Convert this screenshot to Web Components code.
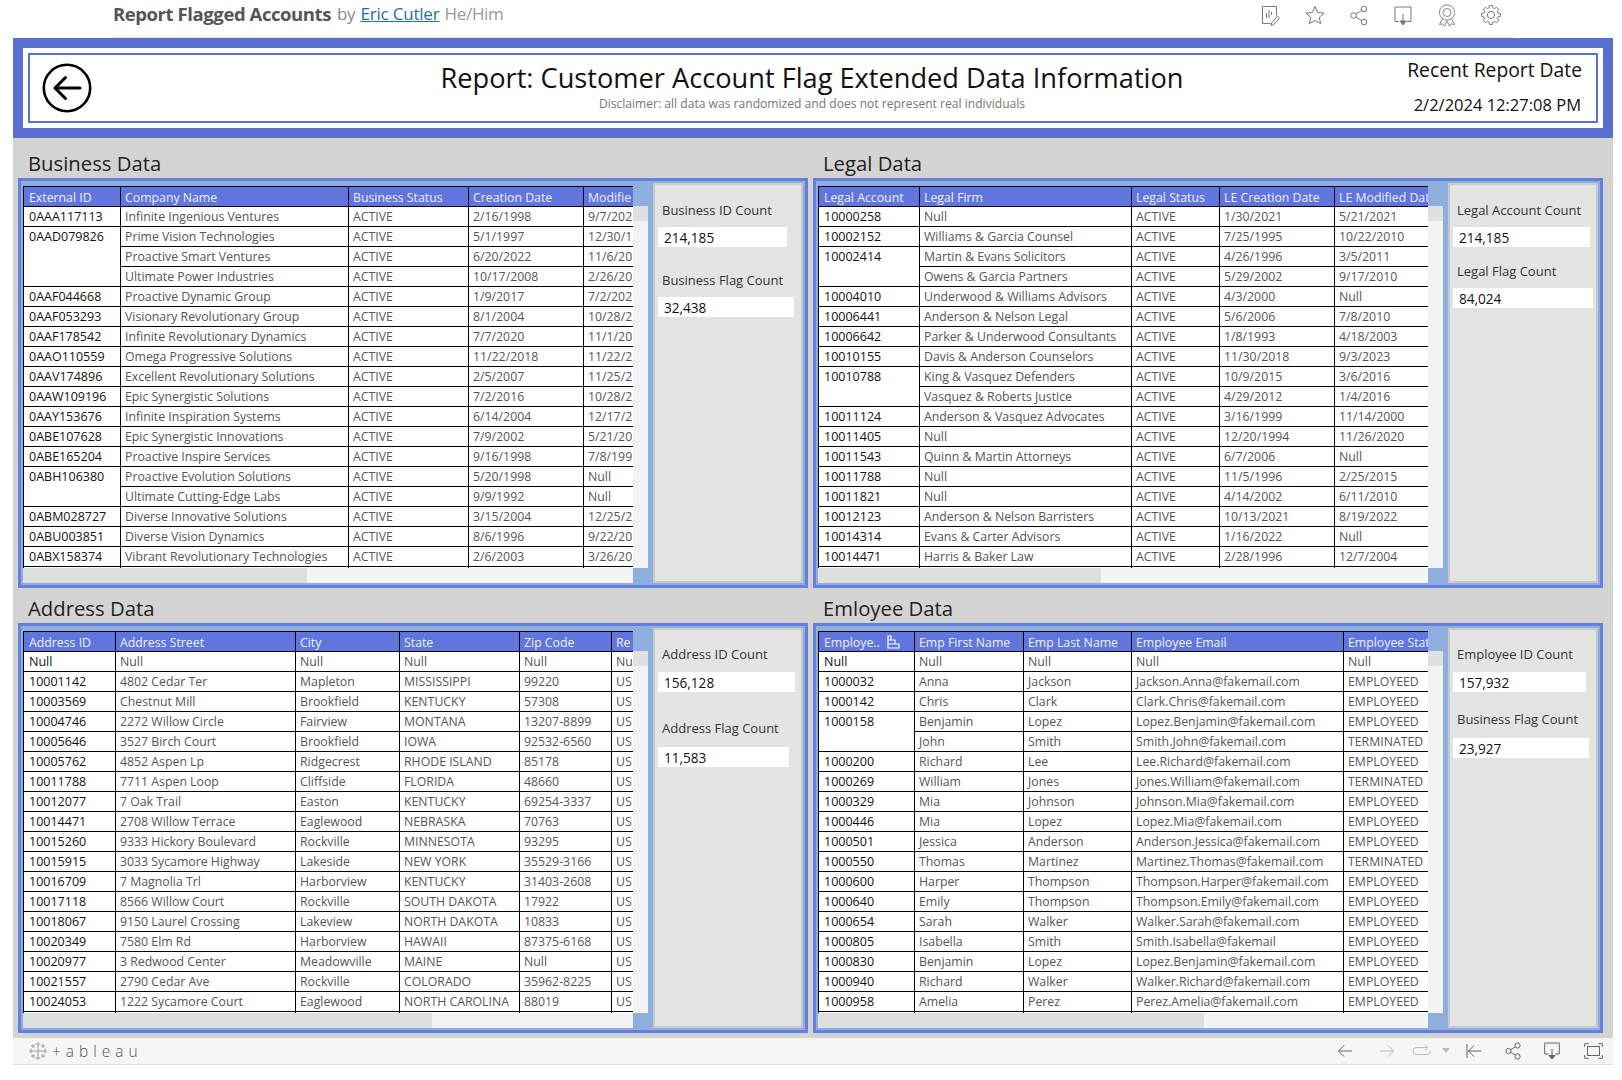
<!DOCTYPE html>
<html lang="en"><head><meta charset="utf-8"><title>Report Flagged Accounts</title>
<style>
html,body{margin:0;background:#fff;font-family:"Open Sans","Noto Sans",sans-serif}
body{width:1622px;height:1080px;overflow:hidden}
</style></head><body>
<top-bar></top-bar>
<report-dash>
  <report-header slot="header"></report-header>
  <report-panel heading="Business Data" thumb="284" style="--pt:15px;--pb:5px">
    <data-grid slot="table" source="business"></data-grid>
    <side-stat slot="side" label="Business ID Count" value="214,185" style="--w:129px;--mt:15px;--gap:7px"></side-stat>
    <side-stat slot="side" label="Business Flag Count" value="32,438" style="--w:136px;--mt:23px;--gap:7px"></side-stat>
  </report-panel>
  <report-panel heading="Legal Data" thumb="283" style="--pt:15px;--pb:5px">
    <data-grid slot="table" source="legal"></data-grid>
    <side-stat slot="side" label="Legal Account Count" value="214,185" style="--w:137px;--mt:15px;--gap:7px"></side-stat>
    <side-stat slot="side" label="Legal Flag Count" value="84,024" style="--w:140px;--mt:14px;--gap:7px"></side-stat>
  </report-panel>
  <report-panel heading="Address Data" thumb="409" style="--pt:10px;--pb:5px">
    <data-grid slot="table" source="address"></data-grid>
    <side-stat slot="side" label="Address ID Count" value="156,128" style="--w:137px;--mt:14px;--gap:8px"></side-stat>
    <side-stat slot="side" label="Address Flag Count" value="11,583" style="--w:131px;--mt:26px;--gap:9px"></side-stat>
  </report-panel>
  <report-panel heading="Emloyee Data" thumb="386" style="--pt:10px;--pb:5px">
    <data-grid slot="table" source="employee"></data-grid>
    <side-stat slot="side" label="Employee ID Count" value="157,932" style="--w:133px;--mt:14px;--gap:8px"></side-stat>
    <side-stat slot="side" label="Business Flag Count" value="23,927" style="--w:136px;--mt:17px;--gap:9px"></side-stat>
  </report-panel>
</report-dash>
<bottom-bar></bottom-bar>
<script>
const DATA={
business:{cols:[97,228,120,115,50],head:["External ID","Company Name","Business Status","Creation Date","Modifie"],rows:`0AAA117113|Infinite Ingenious Ventures|ACTIVE|2/16/1998|9/7/202
0AAD079826|Prime Vision Technologies|ACTIVE|5/1/1997|12/30/1
|Proactive Smart Ventures|ACTIVE|6/20/2022|11/6/20
|Ultimate Power Industries|ACTIVE|10/17/2008|2/26/20
0AAF044668|Proactive Dynamic Group|ACTIVE|1/9/2017|7/2/202
0AAF053293|Visionary Revolutionary Group|ACTIVE|8/1/2004|10/28/2
0AAF178542|Infinite Revolutionary Dynamics|ACTIVE|7/7/2020|11/1/20
0AAO110559|Omega Progressive Solutions|ACTIVE|11/22/2018|11/22/2
0AAV174896|Excellent Revolutionary Solutions|ACTIVE|2/5/2007|11/25/2
0AAW109196|Epic Synergistic Solutions|ACTIVE|7/2/2016|10/28/2
0AAY153676|Infinite Inspiration Systems|ACTIVE|6/14/2004|12/17/2
0ABE107628|Epic Synergistic Innovations|ACTIVE|7/9/2002|5/21/20
0ABE165204|Proactive Inspire Services|ACTIVE|9/16/1998|7/8/199
0ABH106380|Proactive Evolution Solutions|ACTIVE|5/20/1998|Null
|Ultimate Cutting-Edge Labs|ACTIVE|9/9/1992|Null
0ABM028727|Diverse Innovative Solutions|ACTIVE|3/15/2004|12/25/2
0ABU003851|Diverse Vision Dynamics|ACTIVE|8/6/1996|9/22/20
0ABX158374|Vibrant Revolutionary Technologies|ACTIVE|2/6/2003|3/26/20`},
legal:{cols:[101,212,88,115,94],head:["Legal Account","Legal Firm","Legal Status","LE Creation Date","LE Modified Dat"],rows:`10000258|Null|ACTIVE|1/30/2021|5/21/2021
10002152|Williams & Garcia Counsel|ACTIVE|7/25/1995|10/22/2010
10002414|Martin & Evans Solicitors|ACTIVE|4/26/1996|3/5/2011
|Owens & Garcia Partners|ACTIVE|5/29/2002|9/17/2010
10004010|Underwood & Williams Advisors|ACTIVE|4/3/2000|Null
10006441|Anderson & Nelson Legal|ACTIVE|5/6/2006|7/8/2010
10006642|Parker & Underwood Consultants|ACTIVE|1/8/1993|4/18/2003
10010155|Davis & Anderson Counselors|ACTIVE|11/30/2018|9/3/2023
10010788|King & Vasquez Defenders|ACTIVE|10/9/2015|3/6/2016
|Vasquez & Roberts Justice|ACTIVE|4/29/2012|1/4/2016
10011124|Anderson & Vasquez Advocates|ACTIVE|3/16/1999|11/14/2000
10011405|Null|ACTIVE|12/20/1994|11/26/2020
10011543|Quinn & Martin Attorneys|ACTIVE|6/7/2006|Null
10011788|Null|ACTIVE|11/5/1996|2/25/2015
10011821|Null|ACTIVE|4/14/2002|6/11/2010
10012123|Anderson & Nelson Barristers|ACTIVE|10/13/2021|8/19/2022
10014314|Evans & Carter Advisors|ACTIVE|1/16/2022|Null
10014471|Harris & Baker Law|ACTIVE|2/28/1996|12/7/2004`},
address:{cols:[92,180,104,120,92,22],head:["Address ID","Address Street","City","State","Zip Code","Re"],rows:`Null|Null|Null|Null|Null|Nu
10001142|4802 Cedar Ter|Mapleton|MISSISSIPPI|99220|US
10003569|Chestnut Mill|Brookfield|KENTUCKY|57308|US
10004746|2272 Willow Circle|Fairview|MONTANA|13207-8899|US
10005646|3527 Birch Court|Brookfield|IOWA|92532-6560|US
10005762|4852 Aspen Lp|Ridgecrest|RHODE ISLAND|85178|US
10011788|7711 Aspen Loop|Cliffside|FLORIDA|48660|US
10012077|7 Oak Trail|Easton|KENTUCKY|69254-3337|US
10014471|2708 Willow Terrace|Eaglewood|NEBRASKA|70763|US
10015260|9333 Hickory Boulevard|Rockville|MINNESOTA|93295|US
10015915|3033 Sycamore Highway|Lakeside|NEW YORK|35529-3166|US
10016709|7 Magnolia Trl|Harborview|KENTUCKY|31403-2608|US
10017118|8566 Willow Court|Rockville|SOUTH DAKOTA|17922|US
10018067|9150 Laurel Crossing|Lakeview|NORTH DAKOTA|10833|US
10020349|7580 Elm Rd|Harborview|HAWAII|87375-6168|US
10020977|3 Redwood Center|Meadowville|MAINE|Null|US
10021557|2790 Cedar Ave|Rockville|COLORADO|35962-8225|US
10024053|1222 Sycamore Court|Eaglewood|NORTH CAROLINA|88019|US`},
employee:{cols:[96,109,108,212,85],sort:true,head:["Employe..","Emp First Name","Emp Last Name","Employee Email","Employee Stat"],rows:`Null|Null|Null|Null|Null
1000032|Anna|Jackson|Jackson.Anna@fakemail.com|EMPLOYEED
1000142|Chris|Clark|Clark.Chris@fakemail.com|EMPLOYEED
1000158|Benjamin|Lopez|Lopez.Benjamin@fakemail.com|EMPLOYEED
|John|Smith|Smith.John@fakemail.com|TERMINATED
1000200|Richard|Lee|Lee.Richard@fakemail.com|EMPLOYEED
1000269|William|Jones|Jones.William@fakemail.com|TERMINATED
1000329|Mia|Johnson|Johnson.Mia@fakemail.com|EMPLOYEED
1000446|Mia|Lopez|Lopez.Mia@fakemail.com|EMPLOYEED
1000501|Jessica|Anderson|Anderson.Jessica@fakemail.com|EMPLOYEED
1000550|Thomas|Martinez|Martinez.Thomas@fakemail.com|TERMINATED
1000600|Harper|Thompson|Thompson.Harper@fakemail.com|EMPLOYEED
1000640|Emily|Thompson|Thompson.Emily@fakemail.com|EMPLOYEED
1000654|Sarah|Walker|Walker.Sarah@fakemail.com|EMPLOYEED
1000805|Isabella|Smith|Smith.Isabella@fakemail|EMPLOYEED
1000830|Benjamin|Lopez|Lopez.Benjamin@fakemail.com|EMPLOYEED
1000940|Richard|Walker|Walker.Richard@fakemail.com|EMPLOYEED
1000958|Amelia|Perez|Perez.Amelia@fakemail.com|EMPLOYEED`}
};
const esc=s=>s.replace(/&/g,"&amp;");
function gearPath(cx,cy,ro,ri,n){let d="";const st=Math.PI*2/n;for(let i=0;i<n;i++){const a=i*st-Math.PI/2;const p=[[a-st*.36,ri],[a-st*.2,ro],[a+st*.2,ro],[a+st*.36,ri]];p.forEach((q,j)=>{const x=cx+Math.cos(q[0])*q[1],y=cy+Math.sin(q[0])*q[1];d+=(i===0&&j===0?"M":"L")+x.toFixed(2)+" "+y.toFixed(2)});}return d+"Z"}
const svgI=(w,h,inner,sw=1,col="#777")=>`<svg width="${w}" height="${h}" viewBox="0 0 ${w} ${h}" fill="none" stroke="${col}" stroke-width="${sw}">${inner}</svg>`;
class TopBar extends HTMLElement{constructor(){super();this.attachShadow({mode:"open"}).innerHTML=`<style>
:host{display:flex;align-items:center;height:37px;margin-left:113px;width:1400px;border-bottom:1px solid #ddd;box-sizing:content-box;font-family:"Open Sans",sans-serif}
.t{font-size:18.5px;font-weight:700;color:#555;letter-spacing:-.42px;margin-right:6px;margin-top:-11px}
.m{font-size:17px;color:#888;margin-top:-10px;letter-spacing:-.3px}
a{color:#1d6f9f;text-decoration:underline;margin:0 5px 0 1px;letter-spacing:-.2px;font-weight:500}
.h{color:#999}
.ic{margin-left:auto;display:flex;gap:20px;padding-right:10px;margin-top:-8px}
svg{display:block}
.first{margin-right:2px}
</style><span class="t">Report Flagged Accounts</span><span class="m">by <a href="#">Eric Cutler</a><span class="h">He/Him</span></span>
<div class="ic">
<span class="first">${svgI(24,24,'<path d="M5.5 20.5V3.5h14v9M5.5 20.5h8"/><path d="M9.5 15V10M12 15V7M14.5 12V9"/><path d="M14.5 20l6-7 2 1.8-6 7-2.5.7z"/>')}</span>
${svgI(24,24,'<path d="M12 3.5l2.6 6 6.5.6-4.9 4.3 1.5 6.4-5.7-3.4-5.7 3.4 1.5-6.4-4.9-4.3 6.5-.6z"/>')}
${svgI(24,24,'<circle cx="17" cy="6" r="2.8"/><circle cx="17" cy="19" r="2.8"/><circle cx="6.5" cy="12.5" r="2.8"/><path d="M9 11l5.7-3.6M9 14l5.7 3.6"/>')}
${svgI(24,24,'<path d="M8 18.5H4V4h16v14.5h-4"/><path d="M12 11v9"/><path d="M9 18h6l-3 4z" fill="#777"/>')}
${svgI(24,24,'<circle cx="12" cy="9.5" r="7.6"/><circle cx="12" cy="9.5" r="4"/><path d="M7.5 15.5L4.5 21.5l3.3-.6 1.7 2.4 2.5-5.6 2.5 5.6 1.7-2.4 3.3.6-3-6"/>',1,"#888")}
${svgI(24,24,'<path d="'+gearPath(12,12,9.5,7.3,8)+'"/><circle cx="12" cy="12" r="3.6"/>')}
</div>`}}
class ReportDash extends HTMLElement{constructor(){super();this.attachShadow({mode:"open"}).innerHTML=`<style>
:host{display:block;margin-left:13px;width:1600px;background:#d3d3d3}
.g{display:grid;grid-template-columns:790px 790px;column-gap:5px;padding:0 10px 5px 5px}
</style><slot name="header"></slot><div class="g"><slot></slot></div>`}}
class ReportHeader extends HTMLElement{constructor(){super();this.attachShadow({mode:"open"}).innerHTML=`<style>
:host{display:block;height:100px;box-sizing:border-box;background:#5a70cf;padding:10px}
.w{background:#fff;height:80px;box-sizing:border-box;padding:5px}
.i{box-sizing:border-box;height:70px;border:2px solid #5a70cf;display:grid;grid-template-columns:1fr auto 1fr;padding:0 14px 0 12px;color:#000}
.c{text-align:center;padding-top:5px}
h1{margin:0;font-size:27.2px;line-height:36px;font-weight:400;color:#111}
p{margin:0;font-size:12.1px;line-height:15px;color:#777}
.r{text-align:right;justify-self:end;padding-top:3px}
.r div:first-child{font-size:19.3px;line-height:24px;color:#111}
.r div:last-child{font-size:16.5px;line-height:22px;margin-top:12px;color:#111;padding-right:1px}
svg{display:block;margin-top:8px}
</style><div class="w"><div class="i">
<svg width="50" height="50" viewBox="0 0 50 50" fill="none" stroke="#000"><circle cx="25" cy="25" r="23.2" stroke-width="2.6"/><path d="M38 25H13M23.5 14.5L13 25l10.5 10.5" stroke-width="3" stroke-linecap="round" stroke-linejoin="round"/></svg>
<div class="c"><h1>Report: Customer Account Flag Extended Data Information</h1><p>Disclaimer: all data was randomized and does not represent real individuals</p></div>
<div class="r"><div>Recent Report Date</div><div>2/2/2024 12:27:08 PM</div></div>
</div></div>`}}
class ReportPanel extends HTMLElement{constructor(){super();const t=this.getAttribute("thumb")||"200";this.attachShadow({mode:"open"}).innerHTML=`<style>
:host{display:block}
h2{margin:0;font-size:20.3px;font-weight:400;line-height:20px;color:#222;padding:var(--pt) 0 var(--pb) 10px}
.p{box-sizing:border-box;height:410px;border:3px solid #6480de;background:#8eaedd;padding:2px;display:flex;gap:5px}
.m{width:625px;padding-top:3px;display:grid;grid-template-columns:610px 15px;grid-template-rows:382px 15px}
.v{padding-top:20px;display:flex}
.vt{flex:1;background:#f3f3f3}
.vt i{display:block;height:15px;background:#e0e0e0}
.h{background:#f3f3f3}
.h i{display:block;height:100%;width:${t}px;background:#dedede}
.s{width:150px;box-sizing:border-box;border:2px solid #c8c8c8;background:#e3e3e3;padding-left:3px;display:flex;flex-direction:column}
.t{overflow:hidden}
</style><h2>${this.getAttribute("heading")}</h2><div class="p"><div class="m"><div class="t"><slot name="table"></slot></div><div class="v"><div class="vt"><i></i></div></div><div class="h"><i></i></div></div><div class="s"><slot name="side"></slot></div></div>`}}
class DataGrid extends HTMLElement{constructor(){super();const d=DATA[this.getAttribute("source")];const rows=d.rows.split("\n").map(r=>r.split("|"));
const span=rows.map((r,i)=>{if(!r[0])return 0;let n=1;while(rows[i+n]&&!rows[i+n][0])n++;return n});
const sort=d.sort?`<svg class="sort" width="13" height="14" viewBox="0 0 13 14" fill="none" stroke="#fff" stroke-width="1.2"><path d="M1 1h3v4H1zM1 5h7v4H1zM1 9h11v4H1z"/></svg>`:"";
const body=rows.map((r,i)=>`<tr>${r.map((c,j)=>j===0?(span[i]?`<td class="id" rowspan="${span[i]}">${esc(c)}</td>`:""):`<td>${esc(c)}</td>`).join("")}</tr>`).join("");
const w=d.cols.reduce((a,b)=>a+b,0);
this.attachShadow({mode:"open"}).innerHTML=`<style>
:host{display:block;width:610px;height:382px;overflow:hidden;background:#fff}
table{table-layout:fixed;width:${w}px;border-collapse:separate;border-spacing:0;font-size:12.3px;color:#555}
th,td{box-sizing:border-box;height:20px;padding:1px 0 0 4px;border-top:1px solid #000;border-left:1px solid #000;white-space:nowrap;overflow:hidden;text-align:left;font-weight:400;line-height:18px;vertical-align:top}
th{background:#6076de;color:#eef1ff;position:relative;padding-top:2px;line-height:17px}
th:first-child{padding-left:5px}
.id{color:#111;font-weight:500;font-size:12.5px;padding-left:5px}
.sort{position:absolute;left:68px;top:3px}
</style><table><colgroup>${d.cols.map(c=>`<col style="width:${c}px">`).join("")}</colgroup><thead><tr>${d.head.map((h,i)=>`<th>${h}${i===0?sort:""}</th>`).join("")}</tr></thead><tbody>${body}<tr>${d.cols.map(()=>"<td></td>").join("")}</tr></tbody></table>`}}
class SideStat extends HTMLElement{constructor(){super();this.attachShadow({mode:"open"}).innerHTML=`<style>
:host{display:block;margin-top:var(--mt)}
.l{font-size:13px;line-height:20px;color:#333;padding-left:4px}
.v{margin-top:var(--gap);width:var(--w);height:20px;background:#fff;box-sizing:border-box;padding-left:6px;font-size:13.6px;line-height:21px;color:#111;font-weight:500}
</style><div class="l">${this.getAttribute("label")}</div><div class="v">${this.getAttribute("value")}</div>`}}
class BottomBar extends HTMLElement{constructor(){super();
let logo="";[[9,9,5],[9,2,2.5],[9,16,2.5],[2,9,2.5],[16,9,2.5],[4,4,2],[14,4,2],[4,14,2],[14,14,2]].forEach(p=>{logo+=`<path d="M${p[0]-p[2]} ${p[1]}h${p[2]*2}M${p[0]} ${p[1]-p[2]}v${p[2]*2}"/>`});
this.attachShadow({mode:"open"}).innerHTML=`<style>
:host{display:flex;align-items:center;height:26px;margin-left:13px;width:1600px;background:#f5f5f5;border-bottom:1px solid #ddd;font-family:"Open Sans",sans-serif;position:relative}
.lg{display:flex;align-items:center;margin-left:16px;gap:5px}
.tx{font-size:15.5px;color:#555;letter-spacing:5px;font-weight:300;line-height:20px}
.ic{margin-left:auto;display:flex;align-items:center;padding-right:10px}
svg{display:block}
</style><div class="lg">${svgI(18,18,logo,.9,"#999")}<span class="tx">+ableau</span></div>
<div class="ic">
<span style="margin-right:26px">${svgI(16,14,'<path d="M15 7H1.5M7 1.5L1.5 7 7 12.5"/>',1,"#666")}</span>
<span style="margin-right:17px">${svgI(16,14,'<path d="M1 7h13.5M9 1.5L14.5 7 9 12.5"/>',1,"#bbb")}</span>
<span style="margin-right:10px">${svgI(20,14,'<path d="M15 3.5H4.5a3.5 3.5 0 0 0 0 7H15a3.5 3.5 0 0 0 3.5-3.5M13 .8L16 3.5 13 6.2"/>',1,"#bbb")}</span>
<span style="margin-right:15px">${svgI(9,6,'<path d="M0 0h8L4 5z" fill="#bbb"/>',0,"#bbb")}</span>
<span style="margin-right:23px">${svgI(16,16,'<path d="M1 1v14M15.5 8H2M8 2.5L2.5 8 8 13.5"/>',1,"#666")}</span>
<span style="margin-right:23px">${svgI(16,18,'<circle cx="12.5" cy="3.5" r="2.6"/><circle cx="12.5" cy="14.5" r="2.6"/><circle cx="3.5" cy="9" r="2.6"/><path d="M5.7 7.7l4.6-2.9M5.7 10.3l4.6 2.9"/>',1,"#666")}</span>
<span style="margin-right:24px">${svgI(16,18,'<path d="M4.5 12H.7V1h14.6v11h-3.8"/><path d="M8 7v9"/><path d="M5 13.5h6L8 17z" fill="#666"/>',1,"#666")}</span>
<span>${svgI(19,16,'<rect x="3.5" y="3.5" width="12" height="9"/><path d="M.7 4V.7h4M14.3.7h4V4M.7 12v3.3h4M14.3 15.3h4V12"/>',1,"#666")}</span>
</div>`}}
customElements.define("top-bar",TopBar);
customElements.define("report-dash",ReportDash);
customElements.define("report-header",ReportHeader);
customElements.define("report-panel",ReportPanel);
customElements.define("data-grid",DataGrid);
customElements.define("side-stat",SideStat);
customElements.define("bottom-bar",BottomBar);
</script>
</body></html>
